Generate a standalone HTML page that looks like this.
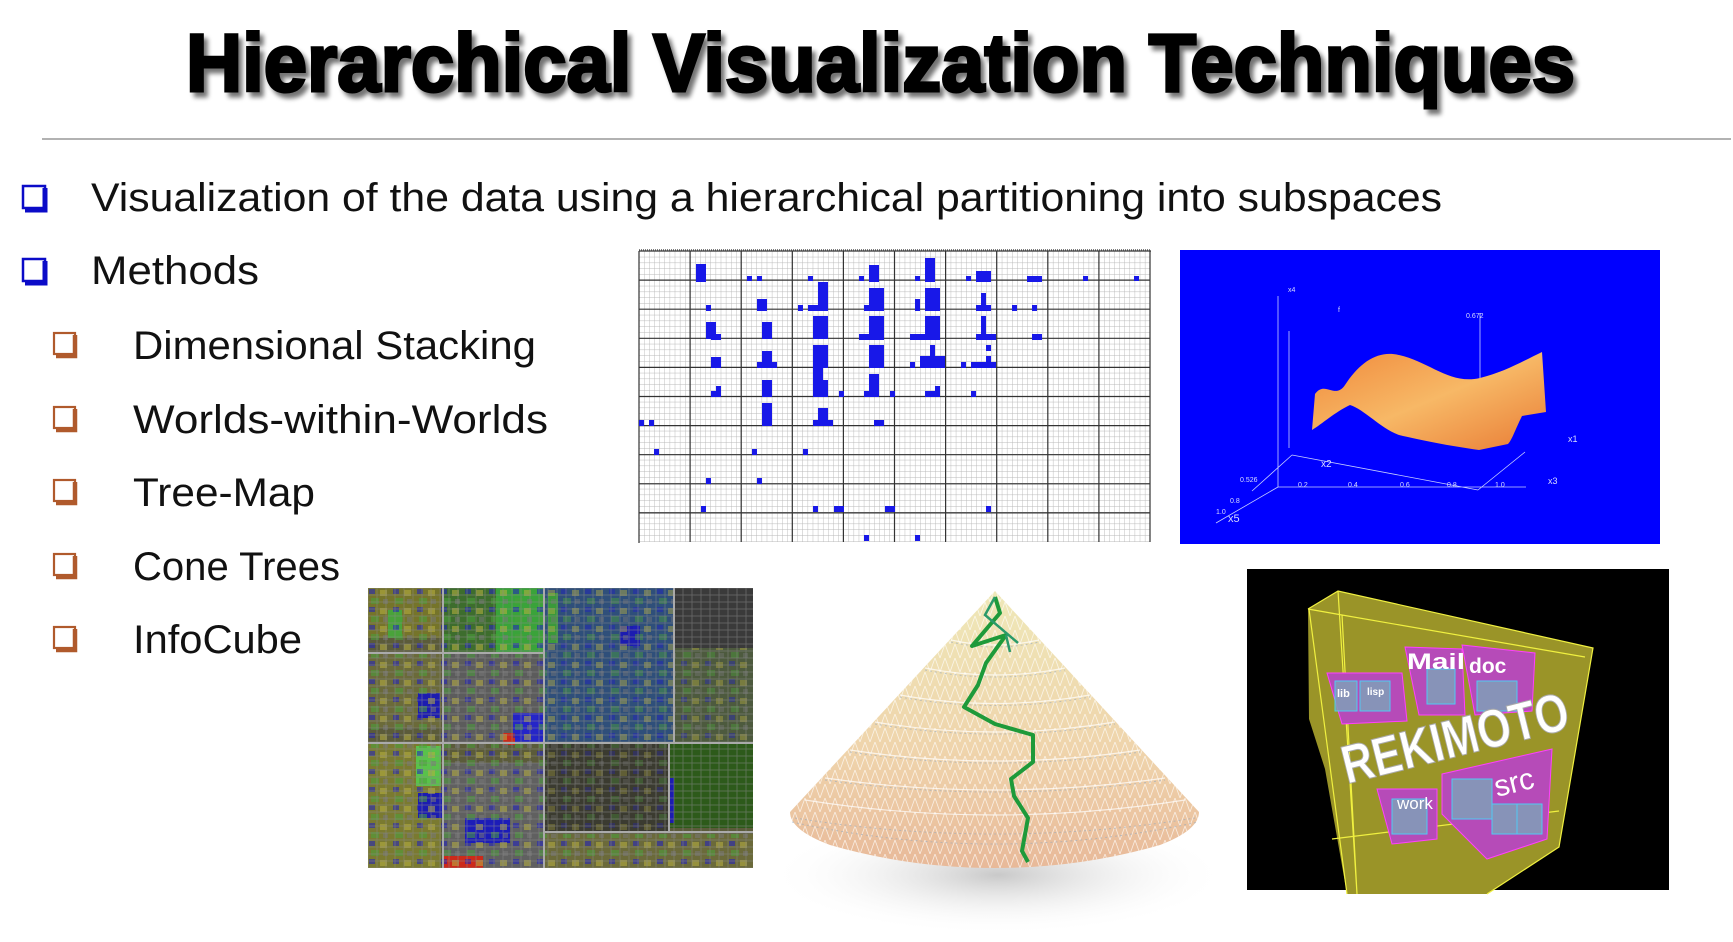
<!DOCTYPE html>
<html><head><meta charset="utf-8">
<style>
html,body{margin:0;padding:0;background:#fff;}
body{width:1733px;height:942px;position:relative;overflow:hidden;font-family:"Liberation Sans",sans-serif;}
.abs{position:absolute;left:0;top:0;}
</style></head>
<body>
<svg class="abs" width="1733" height="942" viewBox="0 0 1733 942">
  <defs>
    <filter id="sh" x="-5%" y="-20%" width="110%" height="150%">
      <feGaussianBlur in="SourceAlpha" stdDeviation="2.5"/>
      <feOffset dx="4" dy="5" result="o"/>
      <feComponentTransfer><feFuncA type="linear" slope="0.55"/></feComponentTransfer>
      <feMerge><feMergeNode/><feMergeNode in="SourceGraphic"/></feMerge>
    </filter>
    <linearGradient id="orng" x1="0" y1="0" x2="1" y2="1">
      <stop offset="0" stop-color="#f08a3c"/><stop offset="0.5" stop-color="#f7b866"/><stop offset="1" stop-color="#e97c35"/>
    </linearGradient>
    <radialGradient id="shad" cx="0.5" cy="0.5" r="0.5">
      <stop offset="0" stop-color="#bbb" stop-opacity="0.8"/><stop offset="1" stop-color="#fff" stop-opacity="0"/>
    </radialGradient>
    <linearGradient id="cone" x1="0" y1="0" x2="0" y2="1">
      <stop offset="0" stop-color="#efe8b8"/><stop offset="0.6" stop-color="#efd3ab"/><stop offset="1" stop-color="#e8b999"/>
    </linearGradient>
    <pattern id="tm" width="9" height="7" patternUnits="userSpaceOnUse">
      <rect width="9" height="7" fill="none" stroke="#8a8a8a" stroke-width="0.8"/>
    </pattern>
    <pattern id="mix" width="24" height="18" patternUnits="userSpaceOnUse">
      <rect x="1" y="1" width="6" height="5" fill="#2020c0"/>
      <rect x="12" y="2" width="7" height="6" fill="#b8b040"/>
      <rect x="3" y="10" width="8" height="6" fill="#4aa03a"/>
      <rect x="15" y="11" width="5" height="5" fill="#777"/>
    </pattern>
    <pattern id="lat" width="10" height="14" patternUnits="userSpaceOnUse">
      <path d="M0 14L5 0L10 14" stroke="#fff" stroke-width="0.8" fill="none" opacity="0.7"/>
    </pattern>
    <pattern id="mg" width="5.11" height="5.8" patternUnits="userSpaceOnUse">
      <path d="M0 0V5.8M0 0H5.11" stroke="#b8b8b8" stroke-width="0.9" fill="none"/>
    </pattern>
  </defs>

  <g filter="url(#sh)">
    <text x="186" y="91" textLength="1389" lengthAdjust="spacingAndGlyphs" font-family="Liberation Sans" font-weight="bold" font-size="82" fill="#000" stroke="#000" stroke-width="3">Hierarchical Visualization Techniques</text>
  </g>
  <line x1="42" y1="139" x2="1731" y2="139" stroke="#999" stroke-width="1.5"/>

  <g fill="none">
    <rect x="23" y="186" width="22" height="22" fill="#fff" stroke="#0b0bc8" stroke-width="2.5"/>
    <path d="M45 188V210H25" stroke="#0b0bc8" stroke-width="5"/>
    <rect x="23" y="259" width="22" height="22" fill="#fff" stroke="#0b0bc8" stroke-width="2.5"/>
    <path d="M45 261V283H25" stroke="#0b0bc8" stroke-width="5"/>
  </g>
  <g fill="none" stroke="#b05a2c">
    <g><rect x="54" y="333" width="21" height="21" fill="#fff" stroke-width="2.2"/><path d="M75 335V356H56" stroke-width="4.5"/></g>
    <g transform="translate(0,74)"><rect x="54" y="333" width="21" height="21" fill="#fff" stroke-width="2.2"/><path d="M75 335V356H56" stroke-width="4.5"/></g>
    <g transform="translate(0,147)"><rect x="54" y="333" width="21" height="21" fill="#fff" stroke-width="2.2"/><path d="M75 335V356H56" stroke-width="4.5"/></g>
    <g transform="translate(0,221)"><rect x="54" y="333" width="21" height="21" fill="#fff" stroke-width="2.2"/><path d="M75 335V356H56" stroke-width="4.5"/></g>
    <g transform="translate(0,294)"><rect x="54" y="333" width="21" height="21" fill="#fff" stroke-width="2.2"/><path d="M75 335V356H56" stroke-width="4.5"/></g>
  </g>
  <g font-family="Liberation Sans" font-size="40" fill="#111">
    <text x="91" y="211" textLength="1351" lengthAdjust="spacingAndGlyphs">Visualization of the data using a hierarchical partitioning into subspaces</text>
    <text x="91" y="284" textLength="168" lengthAdjust="spacingAndGlyphs">Methods</text>
    <text x="133" y="359" textLength="403" lengthAdjust="spacingAndGlyphs">Dimensional Stacking</text>
    <text x="133" y="433" textLength="415" lengthAdjust="spacingAndGlyphs">Worlds-within-Worlds</text>
    <text x="133" y="506" textLength="182" lengthAdjust="spacingAndGlyphs">Tree-Map</text>
    <text x="133" y="580" textLength="207" lengthAdjust="spacingAndGlyphs">Cone Trees</text>
    <text x="133" y="653" textLength="169" lengthAdjust="spacingAndGlyphs">InfoCube</text>
  </g>

  <g transform="translate(639,251)">
    <rect x="0" y="0" width="511" height="291" fill="#fff"/>
    <rect x="0" y="0" width="511" height="291" fill="url(#mg)"/>
    <g stroke="#333" stroke-width="1.2">
      <path d="M0 0V292M51.1 0V291M102.2 0V291M153.3 0V291M204.4 0V291M255.5 0V291M306.6 0V291M357.7 0V291M408.8 0V291M459.9 0V291M511 0V291"/>
      <path d="M0 0H512M0 29.1H511M0 58.2H511M0 87.3H511M0 116.4H511M0 145.5H511M0 174.6H511M0 203.7H511M0 232.8H511M0 261.9H511"/>
    </g>
    <path d="M0 -1H512" stroke="#555" stroke-width="1.5" stroke-dasharray="1 1"/>
    <g fill="#1818e8" transform="translate(-3,-3)">
      <rect x="60" y="16" width="10" height="18"/><rect x="111" y="28" width="5" height="5"/><rect x="121" y="28" width="5" height="5"/><rect x="172" y="28" width="5" height="5"/><rect x="223" y="28" width="5" height="5"/><rect x="233" y="17" width="10" height="17"/><rect x="279" y="28" width="5" height="5"/><rect x="289" y="10" width="10" height="24"/><rect x="330" y="28" width="5" height="5"/><rect x="340" y="23" width="15" height="11"/><rect x="391" y="28" width="15" height="6"/><rect x="447" y="28" width="5" height="5"/><rect x="498" y="28" width="5" height="5"/>
      <rect x="70" y="57" width="5" height="6"/><rect x="121" y="51" width="10" height="12"/><rect x="162" y="57" width="5" height="6"/><rect x="172" y="57" width="20" height="6"/><rect x="182" y="34" width="10" height="29"/><rect x="228" y="57" width="20" height="6"/><rect x="233" y="40" width="15" height="23"/><rect x="279" y="51" width="5" height="12"/><rect x="289" y="40" width="15" height="23"/><rect x="340" y="57" width="15" height="6"/><rect x="345" y="45" width="5" height="12"/><rect x="376" y="57" width="5" height="6"/><rect x="396" y="57" width="5" height="6"/>
      <rect x="70" y="74" width="10" height="17"/><rect x="75" y="86" width="10" height="6"/><rect x="126" y="74" width="10" height="17"/><rect x="177" y="68" width="15" height="23"/><rect x="223" y="86" width="25" height="6"/><rect x="233" y="68" width="15" height="23"/><rect x="274" y="86" width="30" height="6"/><rect x="289" y="68" width="15" height="23"/><rect x="340" y="86" width="20" height="6"/><rect x="345" y="68" width="5" height="18"/><rect x="396" y="86" width="10" height="6"/>
      <rect x="75" y="109" width="10" height="11"/><rect x="121" y="114" width="20" height="6"/><rect x="126" y="103" width="10" height="17"/><rect x="177" y="97" width="15" height="23"/><rect x="233" y="97" width="15" height="23"/><rect x="274" y="114" width="5" height="6"/><rect x="284" y="108" width="25" height="12"/><rect x="294" y="97" width="5" height="23"/><rect x="325" y="114" width="5" height="6"/><rect x="335" y="114" width="25" height="6"/><rect x="350" y="97" width="5" height="6"/><rect x="350" y="108" width="5" height="6"/>
      <rect x="75" y="143" width="10" height="6"/><rect x="80" y="138" width="5" height="11"/><rect x="126" y="132" width="10" height="17"/><rect x="177" y="120" width="10" height="29"/><rect x="182" y="132" width="10" height="17"/><rect x="203" y="143" width="5" height="6"/><rect x="233" y="126" width="10" height="23"/><rect x="228" y="143" width="15" height="6"/><rect x="254" y="143" width="5" height="6"/><rect x="289" y="143" width="15" height="6"/><rect x="299" y="138" width="5" height="11"/><rect x="335" y="143" width="5" height="6"/>
      <rect x="3" y="172" width="5" height="6"/><rect x="13" y="172" width="5" height="6"/><rect x="126" y="155" width="10" height="23"/><rect x="177" y="172" width="20" height="6"/><rect x="182" y="160" width="10" height="18"/><rect x="238" y="172" width="10" height="6"/>
      <rect x="18" y="201" width="5" height="6"/><rect x="116" y="201" width="5" height="6"/><rect x="167" y="201" width="5" height="6"/>
      <rect x="70" y="230" width="5" height="6"/><rect x="121" y="230" width="5" height="6"/>
      <rect x="65" y="258" width="5" height="6"/><rect x="177" y="258" width="5" height="6"/><rect x="198" y="258" width="10" height="6"/><rect x="249" y="258" width="10" height="6"/><rect x="350" y="258" width="5" height="6"/>
      <rect x="228" y="287" width="5" height="6"/><rect x="279" y="287" width="5" height="6"/>
    </g>
  </g>

  <rect x="1180" y="250" width="480" height="294" fill="#0000ff"/>
  <g stroke="#c8d0ff" stroke-width="0.8" fill="none">
    <path d="M1278 296V487H1526M1278 487L1216 523M1289 331V448M1480 313V448M1292 455L1478 490M1478 490L1525 452M1252 491L1292 455"/>
  </g>
  <path d="M1315 394C1325 380 1335 400 1345 385C1360 362 1378 350 1399 355C1430 362 1450 385 1480 378C1505 372 1525 360 1542 352L1546 412L1522 416C1515 430 1512 440 1508 444L1479 450C1450 446 1420 440 1399 435C1380 428 1365 410 1350 405C1335 412 1322 424 1312 430Z" fill="url(#orng)"/>
  <g fill="#d8dcff" font-family="Liberation Sans" font-size="7">
    <text x="1288" y="292">x4</text><text x="1338" y="312">f</text><text x="1466" y="318">0.672</text>
    <text x="1568" y="442" font-size="9">x1</text><text x="1548" y="484" font-size="9">x3</text><text x="1321" y="467" font-size="10">x2</text><text x="1228" y="522" font-size="11">x5</text>
    <text x="1216" y="514">1.0</text><text x="1230" y="503">0.8</text><text x="1240" y="482">0.526</text><text x="1298" y="487">0.2</text><text x="1348" y="487">0.4</text><text x="1400" y="487">0.6</text><text x="1447" y="487">0.8</text><text x="1495" y="487">1.0</text>
  </g>

  <g transform="translate(368,588)">
    <rect width="385" height="281" fill="#5b5b3a"/>
    <rect x="0" y="0" width="73" height="50" fill="#75742a"/>
    <rect x="20" y="22" width="14" height="28" fill="#49a33a"/>
    <rect x="0" y="65" width="73" height="75" fill="#6b6a3a"/>
    <rect x="50" y="105" width="22" height="25" fill="#1c1cb0"/>
    <rect x="75" y="0" width="100" height="65" fill="#3d6d2d"/>
    <rect x="128" y="0" width="47" height="65" fill="#3aa33a"/>
    <rect x="75" y="65" width="100" height="90" fill="#5c5c5c"/>
    <rect x="145" y="125" width="30" height="30" fill="#2525c8"/>
    <rect x="135" y="145" width="12" height="12" fill="#cc2a1a"/>
    <rect x="0" y="155" width="73" height="126" fill="#7a7a30"/>
    <rect x="48" y="158" width="25" height="40" fill="#59c24a"/>
    <rect x="50" y="205" width="25" height="25" fill="#1c1cb0"/>
    <rect x="75" y="175" width="100" height="106" fill="#606060"/>
    <rect x="97" y="230" width="45" height="25" fill="#1c1cb8"/>
    <rect x="75" y="268" width="40" height="13" fill="#cc2a1a"/>
    <rect x="176" y="0" width="130" height="155" fill="#2f4f7a"/>
    <rect x="180" y="5" width="10" height="50" fill="#3a9a3a"/>
    <rect x="252" y="38" width="20" height="20" fill="#1c1cb0"/>
    <rect x="306" y="0" width="79" height="60" fill="#3a3a3a"/>
    <rect x="306" y="60" width="79" height="95" fill="#4d5a3e"/>
    <rect x="176" y="155" width="125" height="88" fill="#3b3b30"/>
    <rect x="301" y="155" width="84" height="85" fill="#2d5a1a"/>
    <rect x="301" y="190" width="5" height="45" fill="#1c1cb0"/>
    <rect x="176" y="246" width="209" height="35" fill="#6b6a3a"/>
    <rect x="0" y="0" width="176" height="281" fill="url(#mix)" opacity="0.55"/>
    <rect x="176" y="0" width="130" height="155" fill="url(#mix)" opacity="0.45"/>
    <rect x="306" y="60" width="79" height="95" fill="url(#mix)" opacity="0.4"/>
    <rect x="176" y="155" width="125" height="88" fill="url(#mix)" opacity="0.3"/>
    <rect x="176" y="246" width="209" height="35" fill="url(#mix)" opacity="0.55"/>
    <rect width="385" height="281" fill="url(#tm)" opacity="0.6"/>
    <g stroke="#aaa" stroke-width="2" fill="none">
      <path d="M75 0V281M176 0V281M0 155H176M176 155H385M306 0V155M301 155V243M176 244H385M0 65H75M75 65H176"/>
    </g>
    <rect x="0" y="280" width="385" height="3" fill="#fff"/>
  </g>

  <ellipse cx="998" cy="875" rx="230" ry="60" fill="url(#shad)"/>
  <path d="M995 591L1199 812Q1199 830 1160 845Q1080 868 995 868Q910 868 830 845Q790 830 790 812Z" fill="url(#cone)"/>
  <path d="M995 591L1199 812Q1199 830 1160 845Q1080 868 995 868Q910 868 830 845Q790 830 790 812Z" fill="url(#lat)"/>
  <g stroke="#fff" stroke-width="1.2" fill="none" opacity="0.7">
    <path d="M951 640Q995 650 1039 640M925 668Q995 682 1065 668M900 695Q995 712 1090 695M875 722Q995 742 1115 722M850 750Q995 772 1140 750M825 778Q995 802 1165 778M805 800Q995 830 1185 800"/>
  </g>
  <g stroke="#9ab" stroke-width="1" fill="none" opacity="0.6" stroke-dasharray="2 3">
    <path d="M951 642Q995 652 1039 642M925 670Q995 684 1065 670M900 697Q995 714 1090 697M875 724Q995 744 1115 724M850 752Q995 774 1140 752M825 780Q995 804 1165 780M795 818Q995 850 1195 818M792 822Q995 866 1198 822"/>
  </g>
  <path d="M995 597L1000 613L972 646L1006 635L986 663L978 685L964 707L995 724L1033 735L1033 762L1011 779L1014 796L1028 818L1022 851L1028 862" stroke="#1e9a3a" stroke-width="4" fill="none" stroke-linejoin="round"/>
  <path d="M995 597L985 615L1018 643M1006 635L1010 652" stroke="#2a9a6a" stroke-width="2.5" fill="none"/>

  <rect x="1247" y="569" width="422" height="321" fill="#000"/>
  <g transform="translate(1247,569)">
    <polygon points="61,40 91,22 346,79 312,278 240,325 100,325 78,200 62,150" fill="#9a9428"/>
    <g stroke="#f0f040" stroke-width="1.2" fill="none">
      <path d="M61,40 91,22 346,79 312,278 240,325M61,40 95,46 338,88M91,22 110,325M95,46 110,325M62,40 100,325M85,270 312,242"/>
    </g>
    <g fill="#b64bb8" stroke="#ff40ff" stroke-width="1">
      <polygon points="80,104 155,104 160,152 95,155"/>
      <polygon points="158,78 215,80 218,146 172,146"/>
      <polygon points="215,76 288,84 285,142 228,146"/>
      <polygon points="130,220 190,220 190,270 145,275"/>
      <polygon points="195,205 305,180 300,270 240,290 195,245"/>
    </g>
    <g fill="#7fa0b8" stroke="#40e0ff" stroke-width="1" opacity="0.85">
      <rect x="88" y="112" width="22" height="30"/><rect x="113" y="112" width="30" height="30"/>
      <rect x="180" y="100" width="28" height="35"/><rect x="230" y="112" width="40" height="30"/>
      <rect x="145" y="230" width="35" height="35"/><rect x="205" y="210" width="40" height="40"/>
      <rect x="245" y="235" width="25" height="30"/><rect x="270" y="235" width="25" height="30"/>
    </g>
    <g fill="#fff" font-family="Liberation Sans" font-weight="bold">
      <text x="160" y="100" font-size="22" textLength="58" lengthAdjust="spacingAndGlyphs">Mail</text>
      <text x="222" y="104" font-size="21">doc</text>
      <text x="90" y="128" font-size="11">lib</text>
      <text x="120" y="126" font-size="10">lisp</text>
      <text x="100" y="215" font-size="54" transform="rotate(-14 100 215)" stroke="#aaa" stroke-width="1" textLength="232" lengthAdjust="spacingAndGlyphs">REKIMOTO</text>
      <text x="150" y="240" font-size="17" font-weight="normal">work</text>
      <text x="250" y="228" font-size="30" font-weight="normal" transform="rotate(-14 250 228)">src</text>
    </g>
  </g>
</svg>
</body></html>
